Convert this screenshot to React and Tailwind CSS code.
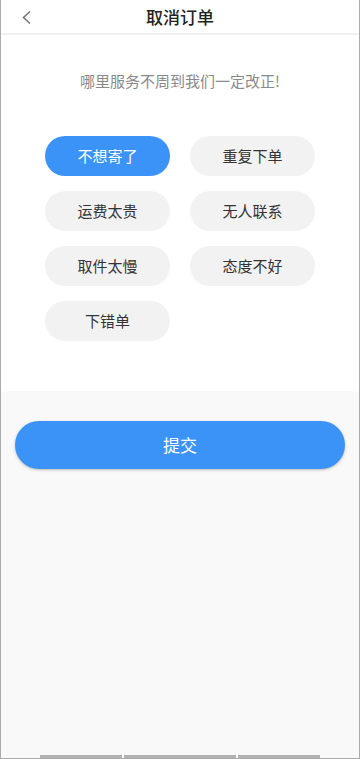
import { useState } from "react";

const reasons = ["不想寄了", "重复下单", "运费太贵", "无人联系", "取件太慢", "态度不好", "下错单"];

export default function App() {
  const [selected, setSelected] = useState(0);

  return (
    <div
      className="w-[360px] h-[759px] flex flex-col bg-[#f9f9f9] border-x border-b border-[#ababab] overflow-hidden"
      style={{ fontFamily: '"Noto Sans CJK SC", "Noto Sans", sans-serif' }}
    >
      {/* header */}
      <div className="relative h-[35px] shrink-0 bg-white border-b-2 border-[#f0f0f0] flex items-center justify-center">
        <svg
          className="absolute left-[20px] top-[10px]"
          width="12"
          height="15"
          viewBox="0 0 12 15"
          fill="none"
        >
          <path d="M9 1.5 L2.5 7.5 L9 13.5" stroke="#777" strokeWidth="1.6" />
        </svg>
        <span className="text-[17px] font-medium text-[#222] leading-none">取消订单</span>
      </div>

      {/* reasons */}
      <div className="bg-white pt-[36px] pb-[50px] shrink-0">
        <p className="text-center text-[15px] leading-[20px] text-[#8a8a8a]">
          哪里服务不周到我们一定改正!
        </p>
        <div className="mt-[45px] grid grid-cols-[125px_125px] justify-center gap-x-[20px] gap-y-[15px]">
          {reasons.map((r, i) => (
            <button
              key={r}
              onClick={() => setSelected(i)}
              className={
                i === selected
                  ? "h-[40px] rounded-full bg-[#3b93f7] text-white text-[15px]"
                  : "h-[40px] rounded-full bg-[#f2f2f2] text-[#333] text-[15px]"
              }
            >
              {r}
            </button>
          ))}
        </div>
      </div>

      {/* submit */}
      <div className="pt-[30px] px-[14px]">
        <button className="w-full h-[48px] rounded-full bg-[#3b93f7] text-white text-[17px] shadow-[0_1px_3px_rgba(0,0,0,0.25)]">
          提交
        </button>
      </div>

      <div className="mt-auto flex gap-[2px] pl-[39px] h-[3px]">
        <div className="w-[82px] bg-[#b3b3b3]" />
        <div className="w-[112px] bg-[#b3b3b3]" />
        <div className="w-[82px] bg-[#b3b3b3]" />
      </div>
    </div>
  );
}
